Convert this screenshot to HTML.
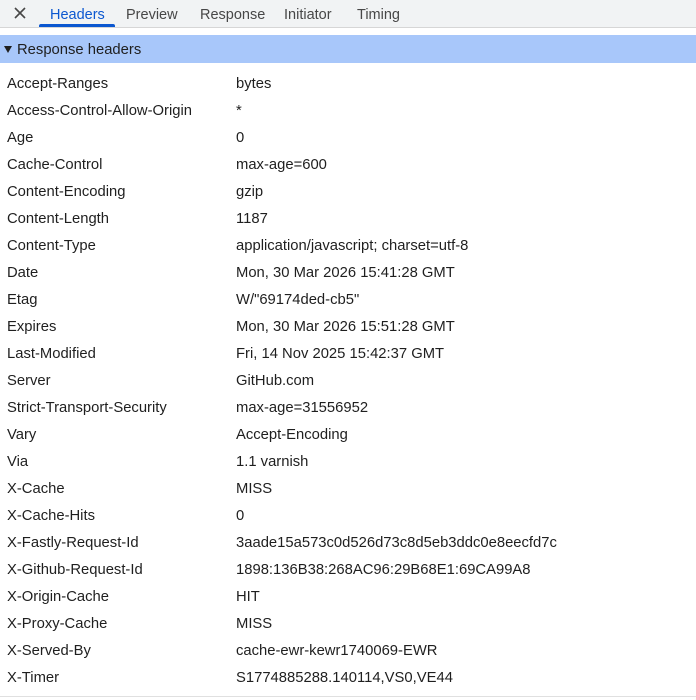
<!DOCTYPE html>
<html><head><style>
body{margin:0;width:696px;height:700px;background:#fff;font-family:"Liberation Sans",sans-serif;font-size:14.8px;color:#1f1f1f;overflow:hidden;position:relative}
.tabs{position:absolute;top:0;left:0;width:696px;height:27px;background:#f1f3f4;border-bottom:1px solid #d6d6d6}
.tab{position:absolute;top:7px;font-size:14.5px;color:#474747}
.ul{position:absolute;left:39px;top:24px;width:76px;height:3px;background:#0b57d0;border-radius:2px 2px 0 0}
.sec{position:absolute;top:35px;left:0;width:696px;height:28px;background:#a8c7fa}
.sec span{position:absolute;left:17px;top:7px;font-size:14.8px}
.tri{position:absolute;left:4px;top:11px;width:0;height:0;border-left:4px solid transparent;border-right:4px solid transparent;border-top:7px solid #1f1f1f}
.row{position:absolute;left:0;height:27px;line-height:27px;width:696px;margin-top:3px}
.k{position:absolute;left:7px}
.v{position:absolute;left:236px}
.bot{position:absolute;left:0;top:696px;width:696px;height:1px;background:#e0e0e0}
</style></head><body>
<div class="tabs">
<svg style="position:absolute;left:14px;top:7px" width="12" height="12"><path d="M1 1L11 11M11 1L1 11" stroke="#474747" stroke-width="1.6"/></svg>
<div class="tab" style="left:50px;color:#0b57d0">Headers</div>
<div class="tab" style="left:126px">Preview</div>
<div class="tab" style="left:200px">Response</div>
<div class="tab" style="left:284px">Initiator</div>
<div class="tab" style="left:357px">Timing</div>
<div class="ul"></div>
</div>
<div class="sec"><div class="tri"></div><span>Response headers</span></div>
<div class="row" style="top:68px"><span class="k">Accept-Ranges</span><span class="v">bytes</span></div>
<div class="row" style="top:95px"><span class="k">Access-Control-Allow-Origin</span><span class="v">*</span></div>
<div class="row" style="top:122px"><span class="k">Age</span><span class="v">0</span></div>
<div class="row" style="top:149px"><span class="k">Cache-Control</span><span class="v">max-age=600</span></div>
<div class="row" style="top:176px"><span class="k">Content-Encoding</span><span class="v">gzip</span></div>
<div class="row" style="top:203px"><span class="k">Content-Length</span><span class="v">1187</span></div>
<div class="row" style="top:230px"><span class="k">Content-Type</span><span class="v">application/javascript; charset=utf-8</span></div>
<div class="row" style="top:257px"><span class="k">Date</span><span class="v">Mon, 30 Mar 2026 15:41:28 GMT</span></div>
<div class="row" style="top:284px"><span class="k">Etag</span><span class="v">W/"69174ded-cb5"</span></div>
<div class="row" style="top:311px"><span class="k">Expires</span><span class="v">Mon, 30 Mar 2026 15:51:28 GMT</span></div>
<div class="row" style="top:338px"><span class="k">Last-Modified</span><span class="v">Fri, 14 Nov 2025 15:42:37 GMT</span></div>
<div class="row" style="top:365px"><span class="k">Server</span><span class="v">GitHub.com</span></div>
<div class="row" style="top:392px"><span class="k">Strict-Transport-Security</span><span class="v">max-age=31556952</span></div>
<div class="row" style="top:419px"><span class="k">Vary</span><span class="v">Accept-Encoding</span></div>
<div class="row" style="top:446px"><span class="k">Via</span><span class="v">1.1 varnish</span></div>
<div class="row" style="top:473px"><span class="k">X-Cache</span><span class="v">MISS</span></div>
<div class="row" style="top:500px"><span class="k">X-Cache-Hits</span><span class="v">0</span></div>
<div class="row" style="top:527px"><span class="k">X-Fastly-Request-Id</span><span class="v">3aade15a573c0d526d73c8d5eb3ddc0e8eecfd7c</span></div>
<div class="row" style="top:554px"><span class="k">X-Github-Request-Id</span><span class="v">1898:136B38:268AC96:29B68E1:69CA99A8</span></div>
<div class="row" style="top:581px"><span class="k">X-Origin-Cache</span><span class="v">HIT</span></div>
<div class="row" style="top:608px"><span class="k">X-Proxy-Cache</span><span class="v">MISS</span></div>
<div class="row" style="top:635px"><span class="k">X-Served-By</span><span class="v">cache-ewr-kewr1740069-EWR</span></div>
<div class="row" style="top:662px"><span class="k">X-Timer</span><span class="v">S1774885288.140114,VS0,VE44</span></div>
<div class="bot"></div>
</body></html>
